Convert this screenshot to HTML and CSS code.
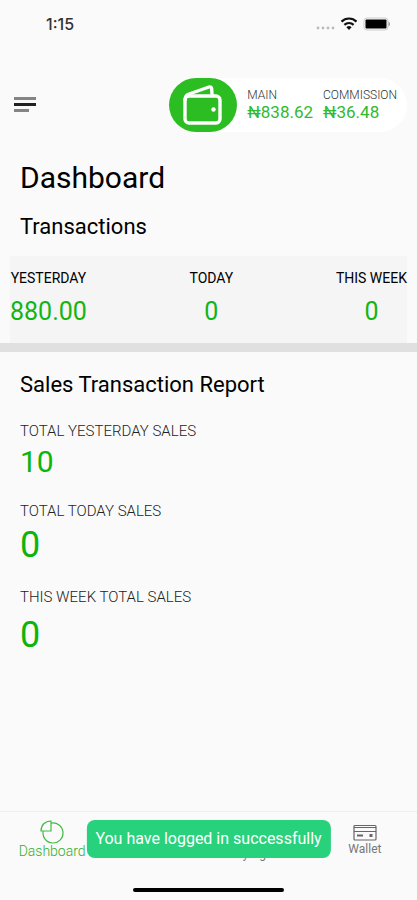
FILE: index.html
```html
<!DOCTYPE html>
<html lang="en">

<head>
    <meta charset="UTF-8">
    <meta name="viewport" content="width=device-width, initial-scale=1.0">
    <title>Dashboard</title>
    <link rel="stylesheet" href="styles.css">
</head>

<body>

    <div class="status-bar">
        <span class="time">1:15</span>
        <div class="status-icons">
            <svg width="20" height="16" viewBox="0 0 20 16" fill="#bbb">
                <circle cx="3" cy="12" r="1.4" />
                <circle cx="8" cy="12" r="1.4" />
                <circle cx="13" cy="12" r="1.4" />
                <circle cx="18" cy="12" r="1.4" />
            </svg>
            <svg width="18" height="16" viewBox="0 0 18 16" fill="none" stroke="#111" stroke-width="2.2">
                <path d="M1.5 5.6a10.6 10.6 0 0 1 15 0" />
                <path d="M4.4 8.9a6.5 6.5 0 0 1 9.2 0" />
                <path d="M9 14l-2.6-2.7a3.8 3.8 0 0 1 5.2 0z" fill="#111" stroke="none" />
            </svg>
            <svg width="28" height="16" viewBox="0 0 28 16">
                <rect x="1" y="2" width="24" height="12" rx="3" fill="none" stroke="#ccc" />
                <rect x="2.500" y="3.500" width="21" height="9" rx="1" fill="#000" />
                <path d="M25.5 5.500v5c2-1 2-4 0-5z" fill="#999" />
            </svg>
        </div>
    </div>

    <header>
        <button class="menu-button" type="button" aria-label="Menu">
            <svg width="22" height="16" viewBox="0 0 22 16">
                <rect y="0" width="22" height="3" fill="#848484" />
                <rect y="6" width="22" height="3" fill="#222" />
                <rect y="12" width="15" height="3" fill="#848484" />
            </svg>
        </button>

        <div class="balance">
            <div class="balance-icon">
                <svg width="42" height="42" viewBox="0 0 42 42" fill="none" stroke="#fff" stroke-width="3.4" stroke-linejoin="round" stroke-linecap="round">
                    <rect x="3" y="12" width="35" height="27" rx="4" />
                    <path d="M3 16c0-4 1-5 4-6L27 3c1.600-.5 2.500.3 2.700 2L30 10" />
                    <circle cx="31.500" cy="25.500" r="2.2" fill="#fff" stroke="none" />
                </svg>
            </div>
            <div class="balance-item">
                <span class="balance-label">MAIN</span>
                <span class="balance-value">₦838.62</span>
            </div>
            <div class="balance-item">
                <span class="balance-label">COMMISSION</span>
                <span class="balance-value">₦36.48</span>
            </div>
        </div>
    </header>

    <main>
        <h1>Dashboard</h1>

        <section class="transactions">
            <h2>Transactions</h2>
            <div class="stats">
                <div class="stat">
                    <span class="stat-label">YESTERDAY</span>
                    <span class="stat-value">880.00</span>
                </div>
                <div class="stat">
                    <span class="stat-label">TODAY</span>
                    <span class="stat-value">0</span>
                </div>
                <div class="stat">
                    <span class="stat-label">THIS WEEK</span>
                    <span class="stat-value">0</span>
                </div>
            </div>
        </section>

        <section class="report">
            <h2>Sales Transaction Report</h2>
            <p class="report-label">TOTAL YESTERDAY SALES</p>
            <p class="report-value small">10</p>
            <p class="report-label">TOTAL TODAY SALES</p>
            <p class="report-value">0</p>
            <p class="report-label">THIS WEEK TOTAL SALES</p>
            <p class="report-value">0</p>
        </section>
    </main>

    <footer>
        <nav>
            <a class="tab active" href="#dashboard">
                <svg width="24" height="24" viewBox="0 0 24 24" fill="none" stroke="#43b943" stroke-width="1.200">
                    <path d="M11 3.200a10 10 0 1 1-7.800 7.800" />
                    <path d="M11 1v10H1C1 5 5 1 11 1z" />
                </svg>
                <span>Dashboard</span>
            </a>
            <a class="tab" href="#sales" aria-label="Sales"></a>
            <a class="tab" href="#agents">
                <svg width="24" height="23" viewBox="0 0 24 23" fill="none" stroke="#777">
                    <circle cx="12" cy="7" r="4" />
                    <path d="M4 20c0-9 16-9 16 0" />
                </svg>
                <span>My Agents</span>
            </a>
            <a class="tab" href="#wallet">
                <svg width="24" height="18" viewBox="0 0 24 18" fill="none" stroke="#666" stroke-width="1.200">
                    <rect x="1" y="1.500" width="22" height="14.500" rx="1" />
                    <path d="M1 3.500h22M1 7.500h22" />
                    <path d="M4 11.500h6" stroke-width="2" />
                    <path d="M16.500 11.500h3" stroke-width="3" />
                </svg>
                <span>Wallet</span>
            </a>
        </nav>
        <div class="toast" role="status">You have logged in successfully</div>
        <div class="home-indicator"></div>
    </footer>

</body>

</html>
```
FILE: styles.css
```css
* {
    box-sizing: border-box;
}

body {
    font-family: Roboto, 'Liberation Sans', sans-serif;
    background-color: #fafafa;
    color: #000;
    margin: 0;
    min-height: 100vh;
    display: flex;
    flex-direction: column;
}

h1,
h2,
p {
    margin: 0;
    font-weight: 400;
}

svg {
    display: block;
}

.status-bar {
    display: flex;
    justify-content: space-between;
    align-items: center;
    height: 48px;
    padding: 0 26px 0 46px;
}

.time {
    font-family: Inter, sans-serif;
    font-size: 16px;
    font-weight: 500;
    color: #333;
}

.status-icons {
    display: flex;
    align-items: center;
    gap: 5px;
}

header {
    display: flex;
    justify-content: space-between;
    align-items: center;
    padding: 30px 10px 0 14px;
}

.menu-button {
    background: none;
    border: none;
    padding: 0;
    cursor: pointer;
}

.balance {
    display: flex;
    align-items: center;
    gap: 10px;
    background-color: #fff;
    border-radius: 27px;
    padding-right: 10px;
}

.balance-icon {
    display: flex;
    align-items: center;
    justify-content: center;
    width: 68px;
    height: 54px;
    border-radius: 27px;
    background-color: #2bbd22;
}

.balance-item {
    display: flex;
    flex-direction: column;
}

.balance-label {
    font-size: 12px;
    line-height: 14px;
    font-weight: 300;
    color: #333;
}

.balance-value {
    font-size: 17px;
    line-height: 20px;
    color: #2fba2f;
}

h1 {
    font-size: 30px;
    line-height: 36px;
    padding: 28px 20px 0;
}

h2 {
    font-size: 22px;
    line-height: 26px;
    padding: 0 20px;
}

.transactions {
    padding-top: 18px;
    border-bottom: 9px solid #e0e0e0;
}

.stats {
    display: flex;
    justify-content: space-between;
    margin: 16px 10px 0;
    padding: 12px 0 16px;
    background-color: #f5f5f5;
}

.stat {
    display: flex;
    flex-direction: column;
    align-items: center;
}

.stat-label {
    font-size: 14px;
    line-height: 20px;
}

.stat-value {
    font-size: 25px;
    line-height: 30px;
    margin-top: 9px;
    color: #14b414;
}

.report {
    padding-top: 20px;
}

.report h2 {
    padding-bottom: 3px;
}

.report-label {
    font-size: 15px;
    line-height: 20px;
    font-weight: 300;
    color: #222;
    padding: 0 20px;
    margin-top: 20px;
}

.report-value {
    font-size: 36px;
    line-height: 44px;
    color: #0cb40c;
    padding: 0 20px;
    margin-top: 2px;
}

.report-value:last-child {
    margin-top: 6px;
}

.report-value.small {
    font-size: 30px;
    line-height: 38px;
}

footer {
    position: relative;
    margin-top: auto;
    border-top: 1px solid #eee;
}

nav {
    display: grid;
    grid-template-columns: repeat(4, 1fr);
    height: 76px;
    padding-top: 8px;
}

.tab {
    display: flex;
    flex-direction: column;
    align-items: center;
    padding-top: 4px;
    font-size: 12px;
    line-height: 14px;
    color: #777;
    text-decoration: none;
}

.tab.active {
    padding-top: 0;
    font-size: 14px;
    font-weight: 300;
    color: #2fae2f;
}

.toast {
    position: absolute;
    top: 8px;
    left: 50%;
    transform: translateX(-50%);
    padding: 9px;
    border-radius: 8px;
    background-color: #28d17c;
    color: #fff;
    font-size: 16px;
    line-height: 20px;
    white-space: nowrap;
}

.home-indicator {
    width: 36%;
    height: 4px;
    margin: 0 auto 8px;
    border-radius: 2px;
    background-color: #000;
}
```
